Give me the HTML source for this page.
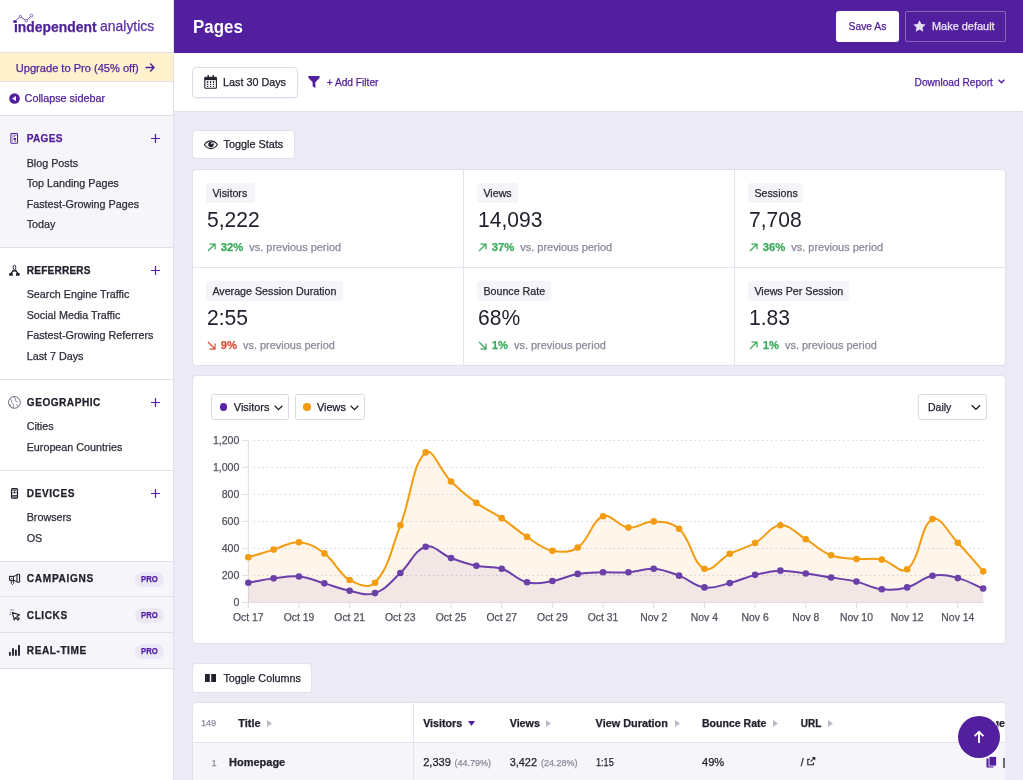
<!DOCTYPE html><html><head><meta charset="utf-8"><style>
html,body{margin:0;padding:0;width:1023px;height:780px;overflow:hidden;background:#fff}
body{position:relative;font-family:"Liberation Sans",sans-serif}
.a{position:absolute;box-sizing:content-box}
.t{position:absolute;white-space:nowrap;line-height:1;-webkit-text-stroke:0.25px currentColor}
body{-webkit-font-smoothing:antialiased}
#w{position:absolute;left:0;top:0;width:1023px;height:780px;will-change:transform}
</style></head><body>
<div id="w"><div class="a" style="left:0px;top:0px;width:173px;height:780px;background:#fff"></div>
<div class="a" style="left:173px;top:0px;width:1px;height:780px;background:#e2dfeb"></div>
<div class="a" style="left:0px;top:52px;width:173px;height:1px;background:#e2dfeb"></div>
<div class="t" style="left:14.2px;top:19.51px;font-size:14.4px;font-weight:700;color:#4f2399;transform:scaleX(0.966);transform-origin:0 0">independent</div>
<div class="t" style="left:100.2px;top:19.31px;font-size:14.4px;font-weight:400;color:#5a2ea6;transform:scaleX(0.97);transform-origin:0 0">analytics</div>
<svg class="a" style="left:0;top:0" width="40" height="30" viewBox="0 0 40 30"><polyline points="14.6,21.6 20.4,16.5 26.3,20.8 31.5,15.5" fill="none" stroke="#6b4fae" stroke-width="1"/><circle cx="14.6" cy="21.6" r="1.5" fill="#4f2399"/><circle cx="20.4" cy="16.5" r="1.2" fill="#fff" stroke="#7a62b4" stroke-width="0.9"/><circle cx="26.3" cy="20.8" r="1.2" fill="#fff" stroke="#7a62b4" stroke-width="0.9"/><circle cx="31.5" cy="15.5" r="1.3" fill="#fff" stroke="#7a62b4" stroke-width="0.9"/></svg>
<div class="a" style="left:0px;top:53px;width:173px;height:28px;background:#fdf2cc"></div>
<div class="a" style="left:0px;top:81px;width:173px;height:1px;background:#e2dfeb"></div>
<div class="t" style="left:15.80px;top:62.92px;font-size:11.08px;font-weight:400;color:#52209e;">Upgrade to Pro (45% off)</div>
<svg class="a" style="left:145px;top:62px" width="10" height="11" viewBox="0 0 10 11"><path d="M0.5 5.5H9M5.2 1.5L9 5.5L5.2 9.5" fill="none" stroke="#52209e" stroke-width="1.4"/></svg>
<svg class="a" style="left:9px;top:93px" width="11" height="11" viewBox="0 0 11 11"><circle cx="5.5" cy="5.5" r="5.3" fill="#52209e"/><path d="M3 5.5L7 3V8Z" fill="#fff"/></svg>
<div class="t" style="left:24.60px;top:93.16px;font-size:10.8px;font-weight:400;color:#52209e;">Collapse sidebar</div>
<div class="a" style="left:0px;top:115px;width:173px;height:1px;background:#e2dfeb"></div>
<div class="a" style="left:0px;top:116px;width:173px;height:131px;background:#f6f5fa"></div><div class="a" style="left:0px;top:247px;width:173px;height:1px;background:#e2dfeb"></div><div class="t" style="left:26.80px;top:133.75px;font-size:10.1px;font-weight:700;color:#52209e;letter-spacing:0.25px">PAGES</div><svg class="a" style="left:8px;top:131px" width="13" height="15" viewBox="8 131 13 15"><rect x="10.9" y="133.5" width="6.6" height="9.8" rx="0.9" fill="#fff" stroke="#52209e" stroke-width="1.1"/><rect x="11.6" y="134.4" width="5.2" height="1.3" fill="#b9b3c7"/><rect x="11.6" y="135.5" width="1.4" height="7.2" fill="#c4bfd0"/><path d="M13.6 136.6L15.4 135.6M13.9 138.5H15.6V139.5H13.9ZM14.2 141H16" stroke="#52209e" stroke-width="1"/></svg><svg class="a" style="left:151px;top:134.1px" width="9" height="9" viewBox="0 0 9 9"><path d="M4.5 0V9M0 4.5H9" stroke="#52209e" stroke-width="1.2"/></svg><div class="t" style="left:26.70px;top:158.20px;font-size:10.75px;font-weight:400;color:#2f2c3a;">Blog Posts</div><div class="t" style="left:26.70px;top:178.20px;font-size:10.75px;font-weight:400;color:#2f2c3a;">Top Landing Pages</div><div class="t" style="left:26.70px;top:199.20px;font-size:10.75px;font-weight:400;color:#2f2c3a;">Fastest-Growing Pages</div><div class="t" style="left:26.70px;top:219.20px;font-size:10.75px;font-weight:400;color:#2f2c3a;">Today</div>
<div class="a" style="left:0px;top:379px;width:173px;height:1px;background:#e2dfeb"></div><div class="t" style="left:26.80px;top:265.75px;font-size:10.1px;font-weight:700;color:#24212f;letter-spacing:0.18px">REFERRERS</div><svg class="a" style="left:7px;top:263px" width="15" height="15" viewBox="7 263 15 15"><ellipse cx="14.5" cy="267.6" rx="1.3" ry="2.4" fill="none" stroke="#24212f" stroke-width="1"/><path d="M14.5 270.3L11 273M14.5 270.3L18 273M12 270.9H17" stroke="#24212f" stroke-width="1.1" fill="none"/><rect x="9.2" y="273" width="3.6" height="2.8" rx="0.6" fill="#24212f"/><rect x="16" y="273" width="3.6" height="2.8" rx="0.6" fill="#24212f"/></svg><svg class="a" style="left:151px;top:265.9px" width="9" height="9" viewBox="0 0 9 9"><path d="M4.5 0V9M0 4.5H9" stroke="#52209e" stroke-width="1.2"/></svg><div class="t" style="left:26.70px;top:289.20px;font-size:10.75px;font-weight:400;color:#2f2c3a;">Search Engine Traffic</div><div class="t" style="left:26.70px;top:310.20px;font-size:10.75px;font-weight:400;color:#2f2c3a;">Social Media Traffic</div><div class="t" style="left:26.70px;top:330.20px;font-size:10.75px;font-weight:400;color:#2f2c3a;">Fastest-Growing Referrers</div><div class="t" style="left:26.70px;top:351.20px;font-size:10.75px;font-weight:400;color:#2f2c3a;">Last 7 Days</div>
<div class="a" style="left:0px;top:470px;width:173px;height:1px;background:#e2dfeb"></div><div class="t" style="left:26.80px;top:397.75px;font-size:10.1px;font-weight:700;color:#24212f;letter-spacing:0.5px">GEOGRAPHIC</div><svg class="a" style="left:6px;top:394px" width="17" height="17" viewBox="6 394 17 17"><circle cx="14.4" cy="402.4" r="5.9" fill="none" stroke="#6f6a7c" stroke-width="1"/><path d="M10.3 398.8C11.5 399.6 12 400.3 11.6 401.4S12.7 403.3 13.4 404.4S13.2 406.7 13.5 408.2M13.4 397C14.6 397.6 16 398.6 15.6 400S16.4 401.8 17.6 401.6M9 403.6C10 404.3 10.6 405.4 10.9 406.6M16.6 404.5C17 405.4 17.4 406.3 18.6 406.2" fill="none" stroke="#7a7588" stroke-width="0.9"/></svg><svg class="a" style="left:151px;top:397.5px" width="9" height="9" viewBox="0 0 9 9"><path d="M4.5 0V9M0 4.5H9" stroke="#52209e" stroke-width="1.2"/></svg><div class="t" style="left:26.70px;top:421.20px;font-size:10.75px;font-weight:400;color:#2f2c3a;">Cities</div><div class="t" style="left:26.70px;top:442.20px;font-size:10.75px;font-weight:400;color:#2f2c3a;">European Countries</div>
<div class="a" style="left:0px;top:561px;width:173px;height:1px;background:#e2dfeb"></div><div class="t" style="left:26.80px;top:488.75px;font-size:10.1px;font-weight:700;color:#24212f;letter-spacing:0.55px">DEVICES</div><svg class="a" style="left:9px;top:486px" width="11" height="14" viewBox="9 486 11 14"><rect x="11.5" y="488.5" width="6" height="9.6" rx="0.9" fill="none" stroke="#24212f" stroke-width="1.2"/><path d="M12 489.4H17L16.3 490.8H12.7Z" fill="#24212f"/><path d="M14.5 491.2V493M12.3 492.8H16.7M11.8 495.6H17.2M12.2 496.9H16.8" stroke="#24212f" stroke-width="0.9"/></svg><svg class="a" style="left:151px;top:488.7px" width="9" height="9" viewBox="0 0 9 9"><path d="M4.5 0V9M0 4.5H9" stroke="#52209e" stroke-width="1.2"/></svg><div class="t" style="left:26.70px;top:512.20px;font-size:10.75px;font-weight:400;color:#2f2c3a;">Browsers</div><div class="t" style="left:26.70px;top:533.20px;font-size:10.75px;font-weight:400;color:#2f2c3a;">OS</div>
<div class="a" style="left:0px;top:562px;width:173px;height:34px;background:#f6f5fa"></div><div class="a" style="left:0px;top:596px;width:173px;height:1px;background:#e2dfeb"></div><div class="t" style="left:26.80px;top:573.75px;font-size:10.1px;font-weight:700;color:#24212f;letter-spacing:0.7px">CAMPAIGNS</div><svg class="a" style="left:7px;top:572px" width="15" height="15" viewBox="7 572 15 15"><rect x="9.6" y="576.4" width="3.8" height="3.9" fill="none" stroke="#24212f" stroke-width="1.1"/><circle cx="11.5" cy="578.4" r="0.5" fill="#24212f"/><path d="M13.4 576.6L17 575M13.4 580.2L17 581.6" stroke="#24212f" stroke-width="1" fill="none"/><rect x="17" y="574.3" width="2.6" height="8" rx="0.6" fill="none" stroke="#24212f" stroke-width="1.1"/><path d="M11.3 580.8H13.6V583.4L12.45 584.6L11.3 583.4Z" fill="none" stroke="#24212f" stroke-width="0.9"/></svg><div class="a" style="left:134.6px;top:571.9px;width:29px;height:15.3px;border-radius:8px;background:#ebe8f3"></div><div class="t" style="left:140.80px;top:574.77px;font-size:8.9px;font-weight:700;color:#52209e;transform:scaleX(0.87);transform-origin:0 0">PRO</div>
<div class="a" style="left:0px;top:597px;width:173px;height:35px;background:#f6f5fa"></div><div class="a" style="left:0px;top:632px;width:173px;height:1px;background:#e2dfeb"></div><div class="t" style="left:26.80px;top:610.75px;font-size:10.1px;font-weight:700;color:#24212f;letter-spacing:0.55px">CLICKS</div><svg class="a" style="left:7px;top:607px" width="15" height="15" viewBox="7 607 15 15"><path d="M12.3 612.6L19.6 614.8L16.8 616.2L19.3 618.8L18 620L15.6 617.5L14.3 620Z" fill="none" stroke="#24212f" stroke-width="1.1" stroke-linejoin="round"/><path d="M9.6 614.6H11M9.6 612.3L10.8 612.9M10.3 610H11M11.8 609.3V610.6M13.4 609.6L12.9 610.8" stroke="#5d596a" stroke-width="0.9"/></svg><div class="a" style="left:134.6px;top:608.0px;width:29px;height:15.3px;border-radius:8px;background:#ebe8f3"></div><div class="t" style="left:140.80px;top:610.77px;font-size:8.9px;font-weight:700;color:#52209e;transform:scaleX(0.87);transform-origin:0 0">PRO</div>
<div class="a" style="left:0px;top:633px;width:173px;height:35px;background:#f6f5fa"></div><div class="a" style="left:0px;top:668px;width:173px;height:1px;background:#e2dfeb"></div><div class="t" style="left:26.80px;top:645.75px;font-size:10.1px;font-weight:700;color:#24212f;letter-spacing:0.55px">REAL-TIME</div><svg class="a" style="left:7px;top:643px" width="15" height="15" viewBox="7 643 15 15"><path d="M9.9 652.8V655.1M13 649V655.1M15.9 650.5V655.1M19 645.8V655.1" stroke="#24212f" stroke-width="1.9" stroke-linecap="round"/></svg><div class="a" style="left:134.6px;top:643.9px;width:29px;height:15.3px;border-radius:8px;background:#ebe8f3"></div><div class="t" style="left:140.80px;top:646.77px;font-size:8.9px;font-weight:700;color:#52209e;transform:scaleX(0.87);transform-origin:0 0">PRO</div>
<div class="a" style="left:174px;top:0px;width:849px;height:53px;background:#52209e"></div>
<div class="a" style="left:174px;top:53px;width:849px;height:58px;background:#fff"></div>
<div class="a" style="left:174px;top:111px;width:849px;height:1px;background:#e2dfeb"></div>
<div class="a" style="left:174px;top:112px;width:849px;height:668px;background:#eceaf4"></div>
<div class="t" style="left:192.50px;top:17.89px;font-size:18.2px;font-weight:700;color:#fff;transform:scaleX(0.93);transform-origin:0 0;-webkit-text-stroke:0">Pages</div>
<div class="a" style="left:836px;top:10.5px;width:63px;height:31.5px;background:#fff;border-radius:3px"></div>
<div class="t" style="left:848.60px;top:21.58px;font-size:10.3px;font-weight:400;color:#52209e;">Save As</div>
<div class="a" style="left:905px;top:10.5px;width:99px;height:29.8px;border:1px solid rgba(255,255,255,0.3);border-radius:2px"></div>
<svg class="a" style="left:913px;top:20px" width="13" height="12" viewBox="0 0 13 12"><path d="M6.5 0.3L8.4 4.1L12.6 4.6L9.5 7.5L10.3 11.7L6.5 9.6L2.7 11.7L3.5 7.5L0.4 4.6L4.6 4.1Z" fill="#e6e1f0"/></svg>
<div class="t" style="left:932.00px;top:21.03px;font-size:10.95px;font-weight:400;color:#ebe7f3;">Make default</div>
<div class="a" style="left:192px;top:67px;width:103.5px;height:28.5px;background:#fff;border:1px solid #dedbe8;border-radius:4px;box-shadow:0 1px 1px rgba(60,40,110,0.06)"></div>
<svg class="a" style="left:203px;top:74px" width="16" height="16" viewBox="203 74 16 16"><rect x="204.8" y="77.3" width="11.6" height="11" rx="0.8" fill="#fff" stroke="#24212f" stroke-width="1.1"/><rect x="204.8" y="77.3" width="11.6" height="2.8" fill="#24212f"/><rect x="205.3" y="80.1" width="1" height="8" fill="#b3aec0"/><path d="M208.2 75.4V78.3M213.2 75.4V78.3" stroke="#24212f" stroke-width="1.4" stroke-linecap="round"/><path d="M207.7 81V83.3M210.6 81V83.3M213.5 81V83.3" stroke="#24212f" stroke-width="1.1"/><path d="M207.7 84.1V85M210.6 84.1V85M213.5 84.1V85M207.7 86.1V87.1M210.6 86.1V87.1M213.5 86.1V87.1" stroke="#24212f" stroke-width="1.2"/></svg>
<div class="t" style="left:223.00px;top:77.16px;font-size:10.8px;font-weight:400;color:#24212f;">Last 30 Days</div>
<svg class="a" style="left:308px;top:76px" width="12" height="12" viewBox="0 0 12 12"><path d="M0.2 0.8Q0.2 0 1 0H11Q11.8 0 11.8 0.8Q11.8 1.6 11 2.5L7.4 6.2V11.6Q7.4 12 6.9 11.8L4.9 10.6Q4.6 10.4 4.6 10V6.2L1 2.5Q0.2 1.6 0.2 0.8Z" fill="#52209e"/></svg>
<div class="t" style="left:326.70px;top:77.67px;font-size:10.2px;font-weight:400;color:#52209e;">+ Add Filter</div>
<div class="t" style="left:914.60px;top:77.71px;font-size:10.15px;font-weight:400;color:#52209e;">Download Report</div>
<svg class="a" style="left:998px;top:79px" width="7" height="5" viewBox="0 0 7 5"><path d="M0.6 0.8L3.5 3.8L6.4 0.8" fill="none" stroke="#52209e" stroke-width="1.3"/></svg>
<div class="a" style="left:192.4px;top:129.8px;width:100.6px;height:27.4px;background:#fff;border:1px solid #e3e0ec;border-radius:4px"></div>
<svg class="a" style="left:202px;top:138px" width="18" height="13" viewBox="202 138 18 13"><path d="M204.4 144.8C206.3 142 208.5 140.9 210.9 140.9S215.5 142 217.4 144.8C215.5 147.6 213.3 148.6 210.9 148.6S206.3 147.6 204.4 144.8Z" fill="none" stroke="#24212f" stroke-width="1.1"/><circle cx="211" cy="144.5" r="2.75" fill="#24212f"/><circle cx="211.9" cy="143.3" r="0.85" fill="#fff"/></svg>
<div class="t" style="left:223.50px;top:139.13px;font-size:10.83px;font-weight:400;color:#24212f;">Toggle Stats</div>
<div class="a" style="left:192px;top:169px;width:812px;height:195px;background:#fff;border:1px solid #e3e0ec;border-radius:4px"></div>
<div class="a" style="left:463px;top:170px;width:1px;height:196px;background:#e6e3ee"></div>
<div class="a" style="left:734px;top:170px;width:1px;height:196px;background:#e6e3ee"></div>
<div class="a" style="left:193px;top:267px;width:812px;height:1px;background:#e6e3ee"></div>
<div class="a" style="left:206px;top:183px;width:48.7px;height:19.5px;background:#f5f4f9;border-radius:3px"></div>
<div class="t" style="left:212.40px;top:188.24px;font-size:10.7px;font-weight:400;color:#2b2836;">Visitors</div>
<div class="t" style="left:206.80px;top:209.34px;font-size:22.4px;font-weight:400;color:#24212f;transform:scaleX(0.94);transform-origin:0 0;-webkit-text-stroke:0">5,222</div>
<svg class="a" style="left:206.5px;top:242.5px" width="9" height="9" viewBox="0 0 9 9"><path d="M1 8L8 1M2.5 1H8V6.5" fill="none" stroke="#3aab5c" stroke-width="1.25"/></svg>
<div class="t" style="left:220.70px;top:241.73px;font-size:11.3px;font-weight:700;color:#3aab5c;">32%</div>
<div class="t" style="left:249.32px;top:242.03px;font-size:10.95px;font-weight:400;color:#8c889a;">vs. previous period</div>
<div class="a" style="left:477px;top:183px;width:41.1px;height:19.5px;background:#f5f4f9;border-radius:3px"></div>
<div class="t" style="left:483.40px;top:188.24px;font-size:10.7px;font-weight:400;color:#2b2836;">Views</div>
<div class="t" style="left:477.80px;top:209.34px;font-size:22.4px;font-weight:400;color:#24212f;transform:scaleX(0.94);transform-origin:0 0;-webkit-text-stroke:0">14,093</div>
<svg class="a" style="left:477.5px;top:242.5px" width="9" height="9" viewBox="0 0 9 9"><path d="M1 8L8 1M2.5 1H8V6.5" fill="none" stroke="#3aab5c" stroke-width="1.25"/></svg>
<div class="t" style="left:491.70px;top:241.73px;font-size:11.3px;font-weight:700;color:#3aab5c;">37%</div>
<div class="t" style="left:520.32px;top:242.03px;font-size:10.95px;font-weight:400;color:#8c889a;">vs. previous period</div>
<div class="a" style="left:748px;top:183px;width:55.0px;height:19.5px;background:#f5f4f9;border-radius:3px"></div>
<div class="t" style="left:754.40px;top:188.24px;font-size:10.7px;font-weight:400;color:#2b2836;">Sessions</div>
<div class="t" style="left:748.80px;top:209.34px;font-size:22.4px;font-weight:400;color:#24212f;transform:scaleX(0.94);transform-origin:0 0;-webkit-text-stroke:0">7,708</div>
<svg class="a" style="left:748.5px;top:242.5px" width="9" height="9" viewBox="0 0 9 9"><path d="M1 8L8 1M2.5 1H8V6.5" fill="none" stroke="#3aab5c" stroke-width="1.25"/></svg>
<div class="t" style="left:762.70px;top:241.73px;font-size:11.3px;font-weight:700;color:#3aab5c;">36%</div>
<div class="t" style="left:791.32px;top:242.03px;font-size:10.95px;font-weight:400;color:#8c889a;">vs. previous period</div>
<div class="a" style="left:206px;top:281px;width:136.8px;height:19.5px;background:#f5f4f9;border-radius:3px"></div>
<div class="t" style="left:212.40px;top:286.24px;font-size:10.7px;font-weight:400;color:#2b2836;">Average Session Duration</div>
<div class="t" style="left:206.80px;top:307.34px;font-size:22.4px;font-weight:400;color:#24212f;transform:scaleX(0.94);transform-origin:0 0;-webkit-text-stroke:0">2:55</div>
<svg class="a" style="left:206.5px;top:340.5px" width="9" height="9" viewBox="0 0 9 9"><path d="M1 1L8 8M2.5 8H8V2.5" fill="none" stroke="#d9513b" stroke-width="1.25"/></svg>
<div class="t" style="left:220.70px;top:339.73px;font-size:11.3px;font-weight:700;color:#d9513b;">9%</div>
<div class="t" style="left:243.03px;top:340.03px;font-size:10.95px;font-weight:400;color:#8c889a;">vs. previous period</div>
<div class="a" style="left:477px;top:281px;width:73.7px;height:19.5px;background:#f5f4f9;border-radius:3px"></div>
<div class="t" style="left:483.40px;top:286.24px;font-size:10.7px;font-weight:400;color:#2b2836;">Bounce Rate</div>
<div class="t" style="left:477.80px;top:307.34px;font-size:22.4px;font-weight:400;color:#24212f;transform:scaleX(0.94);transform-origin:0 0;-webkit-text-stroke:0">68%</div>
<svg class="a" style="left:477.5px;top:340.5px" width="9" height="9" viewBox="0 0 9 9"><path d="M1 1L8 8M2.5 8H8V2.5" fill="none" stroke="#3aab5c" stroke-width="1.25"/></svg>
<div class="t" style="left:491.70px;top:339.73px;font-size:11.3px;font-weight:700;color:#3aab5c;">1%</div>
<div class="t" style="left:514.03px;top:340.03px;font-size:10.95px;font-weight:400;color:#8c889a;">vs. previous period</div>
<div class="a" style="left:748px;top:281px;width:100.9px;height:19.5px;background:#f5f4f9;border-radius:3px"></div>
<div class="t" style="left:754.40px;top:286.24px;font-size:10.7px;font-weight:400;color:#2b2836;">Views Per Session</div>
<div class="t" style="left:748.80px;top:307.34px;font-size:22.4px;font-weight:400;color:#24212f;transform:scaleX(0.94);transform-origin:0 0;-webkit-text-stroke:0">1.83</div>
<svg class="a" style="left:748.5px;top:340.5px" width="9" height="9" viewBox="0 0 9 9"><path d="M1 8L8 1M2.5 1H8V6.5" fill="none" stroke="#3aab5c" stroke-width="1.25"/></svg>
<div class="t" style="left:762.70px;top:339.73px;font-size:11.3px;font-weight:700;color:#3aab5c;">1%</div>
<div class="t" style="left:785.03px;top:340.03px;font-size:10.95px;font-weight:400;color:#8c889a;">vs. previous period</div>
<div class="a" style="left:192px;top:375px;width:812px;height:267px;background:#fff;border:1px solid #e3e0ec;border-radius:4px"></div>
<div class="a" style="left:211.4px;top:394.3px;width:75.6px;height:23.7px;background:#fff;border:1px solid #dcd8e6;border-radius:2.5px"></div>
<div class="a" style="left:219.9px;top:403.3px;width:7.4px;height:7.4px;border-radius:50%;background:#5a22a8"></div>
<div class="t" style="left:233.80px;top:402.03px;font-size:10.95px;font-weight:400;color:#24212f;">Visitors</div>
<svg class="a" style="left:274.3px;top:404.6px" width="9" height="6" viewBox="0 0 9 6"><path d="M0.7 0.7L4.5 4.6L8.3 0.7" fill="none" stroke="#24212f" stroke-width="1.3"/></svg>
<div class="a" style="left:295px;top:394.3px;width:67.8px;height:23.7px;background:#fff;border:1px solid #dcd8e6;border-radius:2.5px"></div>
<div class="a" style="left:303.3px;top:403.3px;width:7.4px;height:7.4px;border-radius:50%;background:#f39c12"></div>
<div class="t" style="left:317.00px;top:402.07px;font-size:10.9px;font-weight:400;color:#24212f;">Views</div>
<svg class="a" style="left:349.9px;top:404.6px" width="9" height="6" viewBox="0 0 9 6"><path d="M0.7 0.7L4.5 4.6L8.3 0.7" fill="none" stroke="#24212f" stroke-width="1.3"/></svg>
<div class="a" style="left:918.2px;top:393.8px;width:66.4px;height:24.0px;background:#fff;border:1px solid #dcd8e6;border-radius:2.5px"></div>
<div class="t" style="left:928.00px;top:402.41px;font-size:10.5px;font-weight:400;color:#24212f;">Daily</div>
<svg class="a" style="left:970px;top:403px" width="12" height="8" viewBox="970 403 12 8"><path d="M971.6 405.2L975.9 409.3L980.2 405.2" fill="none" stroke="#24212f" stroke-width="1.3"/></svg>
<svg class="a" style="left:0;top:0" width="1023" height="780" viewBox="0 0 1023 780"><path d="M253.3 602.4H983.5" stroke="#d6d2e4" stroke-width="1" stroke-dasharray="1.6 2.9"/><path d="M242 602.4H248.3" stroke="#dedbe9" stroke-width="1"/><path d="M253.3 575.4H983.5" stroke="#d6d2e4" stroke-width="1" stroke-dasharray="1.6 2.9"/><path d="M242 575.4H248.3" stroke="#dedbe9" stroke-width="1"/><path d="M253.3 548.4H983.5" stroke="#d6d2e4" stroke-width="1" stroke-dasharray="1.6 2.9"/><path d="M242 548.4H248.3" stroke="#dedbe9" stroke-width="1"/><path d="M253.3 521.4H983.5" stroke="#d6d2e4" stroke-width="1" stroke-dasharray="1.6 2.9"/><path d="M242 521.4H248.3" stroke="#dedbe9" stroke-width="1"/><path d="M253.3 494.4H983.5" stroke="#d6d2e4" stroke-width="1" stroke-dasharray="1.6 2.9"/><path d="M242 494.4H248.3" stroke="#dedbe9" stroke-width="1"/><path d="M253.3 467.4H983.5" stroke="#d6d2e4" stroke-width="1" stroke-dasharray="1.6 2.9"/><path d="M242 467.4H248.3" stroke="#dedbe9" stroke-width="1"/><path d="M253.3 440.4H983.5" stroke="#d6d2e4" stroke-width="1" stroke-dasharray="1.6 2.9"/><path d="M242 440.4H248.3" stroke="#dedbe9" stroke-width="1"/><path d="M248.3 440V608" stroke="#dedbe9" stroke-width="1"/><path d="M248.30 602V608" stroke="#dedbe9" stroke-width="1"/><path d="M298.98 602V608" stroke="#dedbe9" stroke-width="1"/><path d="M349.66 602V608" stroke="#dedbe9" stroke-width="1"/><path d="M400.34 602V608" stroke="#dedbe9" stroke-width="1"/><path d="M451.02 602V608" stroke="#dedbe9" stroke-width="1"/><path d="M501.70 602V608" stroke="#dedbe9" stroke-width="1"/><path d="M552.38 602V608" stroke="#dedbe9" stroke-width="1"/><path d="M603.06 602V608" stroke="#dedbe9" stroke-width="1"/><path d="M653.74 602V608" stroke="#dedbe9" stroke-width="1"/><path d="M704.42 602V608" stroke="#dedbe9" stroke-width="1"/><path d="M755.10 602V608" stroke="#dedbe9" stroke-width="1"/><path d="M805.78 602V608" stroke="#dedbe9" stroke-width="1"/><path d="M856.46 602V608" stroke="#dedbe9" stroke-width="1"/><path d="M907.14 602V608" stroke="#dedbe9" stroke-width="1"/><path d="M957.82 602V608" stroke="#dedbe9" stroke-width="1"/><path d="M248.30 557.31C258.44 554.23 263.49 552.64 273.64 549.62C283.76 546.60 289.09 541.45 298.98 542.19C309.36 542.96 315.60 546.89 324.32 553.39C335.88 562.01 337.69 573.07 349.66 579.99C357.96 584.79 369.14 589.01 375.00 582.69C389.42 567.14 391.25 548.68 400.34 525.31C411.52 496.57 412.17 464.07 425.68 452.41C432.44 446.58 440.11 470.70 451.02 481.57C460.38 490.90 465.65 495.17 476.36 502.90C485.92 509.81 491.89 511.57 501.70 518.16C512.16 525.18 516.45 530.13 527.04 536.92C536.72 543.14 541.63 548.43 552.38 550.69C561.90 552.70 569.86 552.93 577.72 547.59C590.13 539.16 591.06 521.00 603.06 516.27C611.33 513.01 617.95 526.55 628.40 527.61C638.22 528.60 643.66 521.16 653.74 521.40C663.94 521.64 671.82 522.04 679.08 528.82C692.09 540.99 691.92 562.63 704.42 568.78C712.20 572.62 719.29 559.13 729.76 553.80C739.56 548.81 745.55 548.37 755.10 543.00C765.82 536.98 769.97 526.10 780.44 525.31C790.24 524.58 795.83 533.34 805.78 539.22C816.11 545.33 820.18 551.03 831.12 555.28C840.45 558.91 846.27 558.06 856.46 558.93C866.55 559.79 872.01 557.60 881.80 559.61C892.28 561.75 900.54 574.60 907.14 569.32C920.81 558.40 919.93 525.69 932.48 519.11C940.21 515.05 948.18 532.79 957.82 542.73C968.45 553.69 973.02 559.90 983.16 571.35L983.16 602.4L248.3 602.4Z" fill="rgba(243,156,18,0.09)"/><path d="M248.30 582.69C258.44 580.96 263.45 579.62 273.64 578.37C283.72 577.14 289.01 575.50 298.98 576.48C309.28 577.50 314.21 580.51 324.32 583.37C334.48 586.23 339.34 588.81 349.66 590.79C359.61 592.70 366.08 596.22 375.00 593.08C386.35 589.09 390.81 581.68 400.34 572.97C411.08 563.16 414.16 550.19 425.68 546.78C434.44 544.19 440.66 554.09 451.02 557.99C460.93 561.71 466.03 563.61 476.36 565.81C486.30 567.93 492.16 565.69 501.70 568.78C512.43 572.27 516.28 579.68 527.04 582.28C536.55 584.59 542.43 582.71 552.38 581.07C562.70 579.36 567.40 575.70 577.72 573.91C587.67 572.19 592.91 572.62 603.06 572.29C613.19 571.97 618.31 572.99 628.40 572.29C638.58 571.59 643.74 568.12 653.74 568.78C664.01 569.47 669.26 572.06 679.08 575.67C689.53 579.51 693.86 585.87 704.42 587.41C714.14 588.84 719.81 585.56 729.76 583.10C740.08 580.54 744.78 577.39 755.10 574.86C765.05 572.42 770.27 570.95 780.44 570.67C790.54 570.41 795.68 572.14 805.78 573.51C815.95 574.89 820.98 575.94 831.12 577.56C841.26 579.18 846.48 579.30 856.46 581.61C866.76 584.00 871.45 588.12 881.80 589.30C891.73 590.44 897.47 589.99 907.14 587.41C917.74 584.59 921.88 577.75 932.48 575.80C942.15 574.03 948.06 575.66 957.82 578.10C968.33 580.73 973.02 584.34 983.16 588.50L983.16 602.4L248.3 602.4Z" fill="rgba(90,34,168,0.07)"/><path d="M248.3 602.4H983.5" stroke="#dedbe9" stroke-width="1"/><path d="M248.30 557.31C258.44 554.23 263.49 552.64 273.64 549.62C283.76 546.60 289.09 541.45 298.98 542.19C309.36 542.96 315.60 546.89 324.32 553.39C335.88 562.01 337.69 573.07 349.66 579.99C357.96 584.79 369.14 589.01 375.00 582.69C389.42 567.14 391.25 548.68 400.34 525.31C411.52 496.57 412.17 464.07 425.68 452.41C432.44 446.58 440.11 470.70 451.02 481.57C460.38 490.90 465.65 495.17 476.36 502.90C485.92 509.81 491.89 511.57 501.70 518.16C512.16 525.18 516.45 530.13 527.04 536.92C536.72 543.14 541.63 548.43 552.38 550.69C561.90 552.70 569.86 552.93 577.72 547.59C590.13 539.16 591.06 521.00 603.06 516.27C611.33 513.01 617.95 526.55 628.40 527.61C638.22 528.60 643.66 521.16 653.74 521.40C663.94 521.64 671.82 522.04 679.08 528.82C692.09 540.99 691.92 562.63 704.42 568.78C712.20 572.62 719.29 559.13 729.76 553.80C739.56 548.81 745.55 548.37 755.10 543.00C765.82 536.98 769.97 526.10 780.44 525.31C790.24 524.58 795.83 533.34 805.78 539.22C816.11 545.33 820.18 551.03 831.12 555.28C840.45 558.91 846.27 558.06 856.46 558.93C866.55 559.79 872.01 557.60 881.80 559.61C892.28 561.75 900.54 574.60 907.14 569.32C920.81 558.40 919.93 525.69 932.48 519.11C940.21 515.05 948.18 532.79 957.82 542.73C968.45 553.69 973.02 559.90 983.16 571.35" fill="none" stroke="#f39c12" stroke-width="2"/><path d="M248.30 582.69C258.44 580.96 263.45 579.62 273.64 578.37C283.72 577.14 289.01 575.50 298.98 576.48C309.28 577.50 314.21 580.51 324.32 583.37C334.48 586.23 339.34 588.81 349.66 590.79C359.61 592.70 366.08 596.22 375.00 593.08C386.35 589.09 390.81 581.68 400.34 572.97C411.08 563.16 414.16 550.19 425.68 546.78C434.44 544.19 440.66 554.09 451.02 557.99C460.93 561.71 466.03 563.61 476.36 565.81C486.30 567.93 492.16 565.69 501.70 568.78C512.43 572.27 516.28 579.68 527.04 582.28C536.55 584.59 542.43 582.71 552.38 581.07C562.70 579.36 567.40 575.70 577.72 573.91C587.67 572.19 592.91 572.62 603.06 572.29C613.19 571.97 618.31 572.99 628.40 572.29C638.58 571.59 643.74 568.12 653.74 568.78C664.01 569.47 669.26 572.06 679.08 575.67C689.53 579.51 693.86 585.87 704.42 587.41C714.14 588.84 719.81 585.56 729.76 583.10C740.08 580.54 744.78 577.39 755.10 574.86C765.05 572.42 770.27 570.95 780.44 570.67C790.54 570.41 795.68 572.14 805.78 573.51C815.95 574.89 820.98 575.94 831.12 577.56C841.26 579.18 846.48 579.30 856.46 581.61C866.76 584.00 871.45 588.12 881.80 589.30C891.73 590.44 897.47 589.99 907.14 587.41C917.74 584.59 921.88 577.75 932.48 575.80C942.15 574.03 948.06 575.66 957.82 578.10C968.33 580.73 973.02 584.34 983.16 588.50" fill="none" stroke="#6b40aa" stroke-width="2"/><circle cx="248.30" cy="557.31" r="3.3" fill="#f39c12"/><circle cx="273.64" cy="549.62" r="3.3" fill="#f39c12"/><circle cx="298.98" cy="542.19" r="3.3" fill="#f39c12"/><circle cx="324.32" cy="553.39" r="3.3" fill="#f39c12"/><circle cx="349.66" cy="579.99" r="3.3" fill="#f39c12"/><circle cx="375.00" cy="582.69" r="3.3" fill="#f39c12"/><circle cx="400.34" cy="525.31" r="3.3" fill="#f39c12"/><circle cx="425.68" cy="452.41" r="3.3" fill="#f39c12"/><circle cx="451.02" cy="481.57" r="3.3" fill="#f39c12"/><circle cx="476.36" cy="502.90" r="3.3" fill="#f39c12"/><circle cx="501.70" cy="518.16" r="3.3" fill="#f39c12"/><circle cx="527.04" cy="536.92" r="3.3" fill="#f39c12"/><circle cx="552.38" cy="550.69" r="3.3" fill="#f39c12"/><circle cx="577.72" cy="547.59" r="3.3" fill="#f39c12"/><circle cx="603.06" cy="516.27" r="3.3" fill="#f39c12"/><circle cx="628.40" cy="527.61" r="3.3" fill="#f39c12"/><circle cx="653.74" cy="521.40" r="3.3" fill="#f39c12"/><circle cx="679.08" cy="528.82" r="3.3" fill="#f39c12"/><circle cx="704.42" cy="568.78" r="3.3" fill="#f39c12"/><circle cx="729.76" cy="553.80" r="3.3" fill="#f39c12"/><circle cx="755.10" cy="543.00" r="3.3" fill="#f39c12"/><circle cx="780.44" cy="525.31" r="3.3" fill="#f39c12"/><circle cx="805.78" cy="539.22" r="3.3" fill="#f39c12"/><circle cx="831.12" cy="555.28" r="3.3" fill="#f39c12"/><circle cx="856.46" cy="558.93" r="3.3" fill="#f39c12"/><circle cx="881.80" cy="559.61" r="3.3" fill="#f39c12"/><circle cx="907.14" cy="569.32" r="3.3" fill="#f39c12"/><circle cx="932.48" cy="519.11" r="3.3" fill="#f39c12"/><circle cx="957.82" cy="542.73" r="3.3" fill="#f39c12"/><circle cx="983.16" cy="571.35" r="3.3" fill="#f39c12"/><circle cx="248.30" cy="582.69" r="3.3" fill="#6b40a8"/><circle cx="273.64" cy="578.37" r="3.3" fill="#6b40a8"/><circle cx="298.98" cy="576.48" r="3.3" fill="#6b40a8"/><circle cx="324.32" cy="583.37" r="3.3" fill="#6b40a8"/><circle cx="349.66" cy="590.79" r="3.3" fill="#6b40a8"/><circle cx="375.00" cy="593.08" r="3.3" fill="#6b40a8"/><circle cx="400.34" cy="572.97" r="3.3" fill="#6b40a8"/><circle cx="425.68" cy="546.78" r="3.3" fill="#6b40a8"/><circle cx="451.02" cy="557.99" r="3.3" fill="#6b40a8"/><circle cx="476.36" cy="565.81" r="3.3" fill="#6b40a8"/><circle cx="501.70" cy="568.78" r="3.3" fill="#6b40a8"/><circle cx="527.04" cy="582.28" r="3.3" fill="#6b40a8"/><circle cx="552.38" cy="581.07" r="3.3" fill="#6b40a8"/><circle cx="577.72" cy="573.91" r="3.3" fill="#6b40a8"/><circle cx="603.06" cy="572.29" r="3.3" fill="#6b40a8"/><circle cx="628.40" cy="572.29" r="3.3" fill="#6b40a8"/><circle cx="653.74" cy="568.78" r="3.3" fill="#6b40a8"/><circle cx="679.08" cy="575.67" r="3.3" fill="#6b40a8"/><circle cx="704.42" cy="587.41" r="3.3" fill="#6b40a8"/><circle cx="729.76" cy="583.10" r="3.3" fill="#6b40a8"/><circle cx="755.10" cy="574.86" r="3.3" fill="#6b40a8"/><circle cx="780.44" cy="570.67" r="3.3" fill="#6b40a8"/><circle cx="805.78" cy="573.51" r="3.3" fill="#6b40a8"/><circle cx="831.12" cy="577.56" r="3.3" fill="#6b40a8"/><circle cx="856.46" cy="581.61" r="3.3" fill="#6b40a8"/><circle cx="881.80" cy="589.30" r="3.3" fill="#6b40a8"/><circle cx="907.14" cy="587.41" r="3.3" fill="#6b40a8"/><circle cx="932.48" cy="575.80" r="3.3" fill="#6b40a8"/><circle cx="957.82" cy="578.10" r="3.3" fill="#6b40a8"/><circle cx="983.16" cy="588.50" r="3.3" fill="#6b40a8"/></svg>
<div class="t" style="left:180px;width:59.4px;text-align:right;top:597.33px;font-size:10.6px;color:#55515f">0</div>
<div class="t" style="left:180px;width:59.4px;text-align:right;top:570.33px;font-size:10.6px;color:#55515f">200</div>
<div class="t" style="left:180px;width:59.4px;text-align:right;top:543.33px;font-size:10.6px;color:#55515f">400</div>
<div class="t" style="left:180px;width:59.4px;text-align:right;top:516.33px;font-size:10.6px;color:#55515f">600</div>
<div class="t" style="left:180px;width:59.4px;text-align:right;top:489.33px;font-size:10.6px;color:#55515f">800</div>
<div class="t" style="left:180px;width:59.4px;text-align:right;top:462.33px;font-size:10.6px;color:#55515f">1,000</div>
<div class="t" style="left:180px;width:59.4px;text-align:right;top:435.33px;font-size:10.6px;color:#55515f">1,200</div>
<div class="t" style="left:208.30px;width:80px;text-align:center;top:612.50px;font-size:10.4px;color:#55515f">Oct 17</div>
<div class="t" style="left:258.98px;width:80px;text-align:center;top:612.50px;font-size:10.4px;color:#55515f">Oct 19</div>
<div class="t" style="left:309.66px;width:80px;text-align:center;top:612.50px;font-size:10.4px;color:#55515f">Oct 21</div>
<div class="t" style="left:360.34px;width:80px;text-align:center;top:612.50px;font-size:10.4px;color:#55515f">Oct 23</div>
<div class="t" style="left:411.02px;width:80px;text-align:center;top:612.50px;font-size:10.4px;color:#55515f">Oct 25</div>
<div class="t" style="left:461.70px;width:80px;text-align:center;top:612.50px;font-size:10.4px;color:#55515f">Oct 27</div>
<div class="t" style="left:512.38px;width:80px;text-align:center;top:612.50px;font-size:10.4px;color:#55515f">Oct 29</div>
<div class="t" style="left:563.06px;width:80px;text-align:center;top:612.50px;font-size:10.4px;color:#55515f">Oct 31</div>
<div class="t" style="left:613.74px;width:80px;text-align:center;top:612.50px;font-size:10.4px;color:#55515f">Nov 2</div>
<div class="t" style="left:664.42px;width:80px;text-align:center;top:612.50px;font-size:10.4px;color:#55515f">Nov 4</div>
<div class="t" style="left:715.10px;width:80px;text-align:center;top:612.50px;font-size:10.4px;color:#55515f">Nov 6</div>
<div class="t" style="left:765.78px;width:80px;text-align:center;top:612.50px;font-size:10.4px;color:#55515f">Nov 8</div>
<div class="t" style="left:816.46px;width:80px;text-align:center;top:612.50px;font-size:10.4px;color:#55515f">Nov 10</div>
<div class="t" style="left:867.14px;width:80px;text-align:center;top:612.50px;font-size:10.4px;color:#55515f">Nov 12</div>
<div class="t" style="left:917.82px;width:80px;text-align:center;top:612.50px;font-size:10.4px;color:#55515f">Nov 14</div>
<div class="a" style="left:192.4px;top:663.3px;width:117.7px;height:27.8px;background:#fff;border:1px solid #e3e0ec;border-radius:4px"></div>
<svg class="a" style="left:205px;top:674px" width="11" height="8" viewBox="0 0 11 8"><rect x="0" y="0" width="4.8" height="8" fill="#24212f"/><rect x="6.2" y="0" width="4.8" height="8" fill="#24212f"/></svg>
<div class="t" style="left:223.40px;top:673.12px;font-size:10.84px;font-weight:400;color:#24212f;">Toggle Columns</div>
<div class="a" style="left:192px;top:702px;width:812px;height:90px;background:#fff;border:1px solid #e3e0ec;border-radius:4px;overflow:hidden"></div>
<div class="a" style="left:193px;top:742px;width:812px;height:1px;background:#e6e3ee"></div>
<div class="a" style="left:193px;top:743px;width:812px;height:37px;background:#f6f5fa"></div>
<div class="a" style="left:413px;top:703px;width:1px;height:77px;background:#e6e3ee"></div>
<div class="t" style="left:200.90px;top:718.51px;font-size:9.2px;font-weight:400;color:#8e8a9c;">149</div>
<div class="t" style="left:238.30px;top:717.99px;font-size:11.0px;font-weight:700;color:#24212f;">Title</div>
<svg class="a" style="left:266.9px;top:719.5px" width="5" height="7" viewBox="0 0 5 7"><path d="M0 0L5 3.5L0 7Z" fill="#bdb9c9"/></svg>
<div class="t" style="left:423.20px;top:718.26px;font-size:10.68px;font-weight:700;color:#24212f;">Visitors</div>
<svg class="a" style="left:468px;top:720.5px" width="7" height="5" viewBox="0 0 7 5"><path d="M0 0H7L3.5 5Z" fill="#52209e"/></svg>
<div class="t" style="left:509.70px;top:718.23px;font-size:10.72px;font-weight:700;color:#24212f;">Views</div>
<svg class="a" style="left:546px;top:719.5px" width="5" height="7" viewBox="0 0 5 7"><path d="M0 0L5 3.5L0 7Z" fill="#bdb9c9"/></svg>
<div class="t" style="left:595.60px;top:718.08px;font-size:10.89px;font-weight:700;color:#24212f;">View Duration</div>
<svg class="a" style="left:674.5px;top:719.5px" width="5" height="7" viewBox="0 0 5 7"><path d="M0 0L5 3.5L0 7Z" fill="#bdb9c9"/></svg>
<div class="t" style="left:702.00px;top:718.37px;font-size:10.55px;font-weight:700;color:#24212f;">Bounce Rate</div>
<svg class="a" style="left:773px;top:719.5px" width="5" height="7" viewBox="0 0 5 7"><path d="M0 0L5 3.5L0 7Z" fill="#bdb9c9"/></svg>
<div class="t" style="left:800.70px;top:718.83px;font-size:10.0px;font-weight:700;color:#24212f;">URL</div>
<svg class="a" style="left:827.5px;top:719.5px" width="5" height="7" viewBox="0 0 5 7"><path d="M0 0L5 3.5L0 7Z" fill="#bdb9c9"/></svg>
<div class="t" style="left:996.00px;top:718.24px;font-size:10.7px;font-weight:700;color:#24212f;width:9px;overflow:hidden;direction:rtl">Page</div>
<div class="t" style="left:211.60px;top:758.51px;font-size:9.2px;font-weight:400;color:#8e8a9c;">1</div>
<div class="t" style="left:229.00px;top:756.99px;font-size:11.0px;font-weight:700;color:#24212f;">Homepage</div>
<div class="t" style="left:423.20px;top:756.90px;font-size:11.1px;font-weight:400;color:#24212f;">2,339</div>
<div class="t" style="left:454.60px;top:758.68px;font-size:9.0px;font-weight:400;color:#8e8a9c;">(44.79%)</div>
<div class="t" style="left:509.70px;top:757.07px;font-size:10.9px;font-weight:400;color:#24212f;">3,422</div>
<div class="t" style="left:541.00px;top:758.68px;font-size:9.0px;font-weight:400;color:#8e8a9c;">(24.28%)</div>
<div class="t" style="left:595.60px;top:757.33px;font-size:10.6px;font-weight:400;color:#24212f;transform:scaleX(0.86);transform-origin:0 0">1:15</div>
<div class="t" style="left:702.00px;top:756.90px;font-size:11.1px;font-weight:400;color:#24212f;">49%</div>
<div class="t" style="left:800.70px;top:757.41px;font-size:10.5px;font-weight:400;color:#24212f;">/</div>
<svg class="a" style="left:805px;top:755px" width="12" height="12" viewBox="805 755 12 12"><path d="M810 759.2H807.8V764.8H813.4V762.6" fill="none" stroke="#24212f" stroke-width="1.1"/><path d="M810.6 761.6L814.6 757.6" stroke="#24212f" stroke-width="1.1"/><path d="M811.8 757H815.3V760.5Z" fill="#24212f"/></svg>
<svg class="a" style="left:985.6px;top:756px" width="11" height="12" viewBox="0 0 11 12"><rect x="0.5" y="2.5" width="7" height="9" fill="#52209e"/><rect x="3" y="0.5" width="7.5" height="9.5" fill="#52209e" stroke="#f6f5fa" stroke-width="0.8"/></svg>
<div class="a" style="left:1003px;top:758px;width:2px;height:10px;background:#6d6a7a"></div>
<div class="a" style="left:1005px;top:703px;width:18px;height:77px;background:#eceaf4"></div>
<div class="a" style="left:957.6px;top:715.5px;width:42.4px;height:42.4px;border-radius:50%;background:#52209e;box-shadow:0 0 0 1px rgba(255,255,255,0.6)"></div>
<svg class="a" style="left:973px;top:730px" width="12" height="14" viewBox="0 0 12 14"><path d="M6 13V1.8M1.6 6.2L6 1.8L10.4 6.2" fill="none" stroke="#fff" stroke-width="1.9"/></svg>
</div></body></html>
